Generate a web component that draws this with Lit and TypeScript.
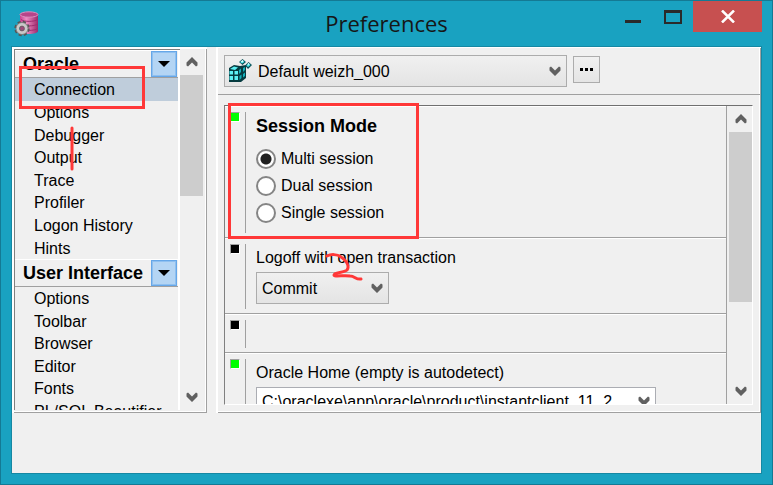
import { LitElement, html, css, svg } from "lit";
import { customElement, property } from "lit/decorators.js";

const chevron = (up = false) => svg`<svg class="chev" width="12" height="10" viewBox="0 0 12 10" aria-hidden="true">
  <path d=${up ? "M.5 8.500V5.500L6 0L11.500 5.500V8.500L10 9.500L6 5.500L2 9.500Z" : "M.5 1.500V4.500L6 10L11.500 4.500V1.500L10 .5L6 4.500L2 .5Z"} fill="#606060"/></svg>`;

@customElement("scroll-strip")
class ScrollStrip extends LitElement {
  @property({ type: Number }) size = 50;
  static styles = css`
    :host { display: flex; flex-direction: column; width: 23px; flex: none; background: #f0f0f0; }
    button { flex: none; height: 26px; padding: 0; border: 0; background: none; display: grid; place-items: center; }
    .track { flex: 1; min-height: 0; }
    .thumb { background: #cdcdcd; }
  `;
  render() {
    return html`<button aria-label="Scroll up">${chevron(true)}</button>
      <div class="track"><div class="thumb" style="height:${this.size}%"></div></div>
      <button aria-label="Scroll down">${chevron()}</button>`;
  }
}

@customElement("drop-down")
class DropDown extends LitElement {
  @property() value = "";
  @property() label = "";
  @property({ type: Boolean, reflect: true }) plain = false;
  @property({ type: Boolean, reflect: true }) icon = false;
  static styles = css`
    :host { display: grid; align-items: center; height: 32px; }
    :host([plain]) { height: 28px; }
    select {
      grid-area: 1 / 1; width: 100%; height: 100%; box-sizing: border-box; appearance: none;
      border: 1px solid #acacac; border-radius: 0; padding: 0 24px 0 5px; margin: 0; color: #000;
      font: 16px "Liberation Sans", Arial, sans-serif;
      background: linear-gradient(#f0f0f0, #e4e4e4);
    }
    :host([icon]) select { padding-left: 33px; }
    :host([plain]) select { background: #fff; border-color: #abadb3; }
    .chev { grid-area: 1 / 1; justify-self: end; margin-right: 6px; pointer-events: none; z-index: 1; }
    ::slotted(svg) { grid-area: 1 / 1; justify-self: start; margin-left: 4px; pointer-events: none; z-index: 1; }
  `;
  render() {
    return html`<select aria-label=${this.label}><option>${this.value}</option></select>
      <slot></slot>${chevron()}`;
  }
}

const groups = [
  { title: "Oracle", items: ["Connection", "Options", "Debugger", "Output", "Trace", "Profiler", "Logon History", "Hints"] },
  { title: "User Interface", items: ["Options", "Toolbar", "Browser", "Editor", "Fonts", "PL/SQL Beautifier"] },
];

const databaseIcon = svg`<svg width="26" height="26" viewBox="0 0 26 26" aria-hidden="true">
  <defs><linearGradient id="pink"><stop offset="0" stop-color="#c8408f"/><stop offset=".35" stop-color="#ee8cc4"/><stop offset="1" stop-color="#9c2a6c"/></linearGradient></defs>
  <path d="M6 3.500V20C6 24 24 24 24 20V3.500Z" fill="url(#pink)"/>
  <ellipse cx="15" cy="3.500" rx="9" ry="2.700" fill="#b8458a" stroke="#dc8fc0"/>
  <path d="M7 8.500C10 11 20 11 24 8.500M7 13C10 15.500 20 15.500 24 13M7 17.500C10 20 20 20 24 17.500" fill="none" stroke="#9e2c70"/>
  <circle cx="8" cy="17.500" r="6.200" fill="none" stroke="#555" stroke-width="3" stroke-dasharray="2.900 1.970"/>
  <circle cx="8" cy="17.500" r="4.400" fill="none" stroke="#c9c9c9" stroke-width="3.400"/>
  <circle cx="8" cy="17.500" r="6" fill="none" stroke="#707070" stroke-width=".8"/>
  <circle cx="8" cy="17.500" r="2.300" fill="#a0487c" stroke="#666"/></svg>`;

const cubesIcon = svg`<svg width="24" height="24" viewBox="0 0 24 24" aria-hidden="true">
  <path d="M1 9L6 6L12 7L18 6V19L13 23H1Z" fill="#063b40"/>
  <path d="M2 10L6 7.500L10 8.500L7 11ZM1.500 12H5V15.500H1.500ZM6.500 12H10V15.500H6.500ZM1.500 17H5V21H1.500ZM6.500 17H10V21H6.500Z" fill="#5cf1f4"/>
  <path d="M11 11L13 9.500V13L11 15ZM11.500 17L13.500 15.500V19L11.500 21ZM15 9L17 8V11L15 13ZM15 15L17 13.500V17L15 18.500Z" fill="#12b2bc"/>
  <path d="M14.500 0L18 3L14.500 6L11 3ZM20.500 3L24 6L20 10L17 6.500Z" fill="#075056"/>
  <path d="M14.500 1L16.500 3L14 4.500L12 3ZM20.500 4L22.500 6L20 8L18.500 6.500Z" fill="#4fe8ec"/>
  <path d="M13 2.500L14.500 1L15.500 2L14 3.500ZM19.500 5L20.500 4L21.500 5L20.500 6Z" fill="#e8ffff"/></svg>`;

@customElement("app-root")
class AppRoot extends LitElement {
  static styles = css`
    :host { display: block; font: 16px/20px "Liberation Sans", Arial, sans-serif; color: #000; }
    * { box-sizing: border-box; }
    .window { position: relative; height: 100vh; display: flex; flex-direction: column; background: #19a2c1; border: 1px solid #147a94; padding: 0 10px 10px; overflow: hidden; }
    .titlebar { flex: none; height: 45px; display: grid; grid-template-columns: 1fr auto 1fr; }
    .logo { padding: 10px 0 0 3px; }
    h1 { margin: 0; font: 22px/44px "Open Sans", "Noto Sans", sans-serif; color: #161616; }
    .controls { display: flex; justify-content: flex-end; align-items: flex-start; }
    .controls button { width: 40px; height: 31px; padding: 0; border: 0; background: none; display: grid; place-items: center; }
    .controls .close { width: 69px; background: #c75050; }
    .client { flex: 1; min-height: 0; display: flex; gap: 9px; background: #f0f0f0; border: 1px solid #1588a3; padding-bottom: 60px; }
    .nav { width: 195px; flex: none; display: flex; border: 1px solid #fff; border-width: 2px 0 0 2px; box-shadow: inset -1px -1px #a0a0a0, inset -2px -2px #fff; padding: 0 4px 3px 0; }
    .list { flex: 1; overflow: hidden; border: solid #808080; border-width: 1px 0 0 1px; }
    .group { border-right: 2px solid #fff; }
    .head { height: 28px; display: flex; align-items: center; justify-content: space-between; border-bottom: 1px solid #a0a0a0; border-top: 1px solid #fff; padding: 0 1px 0 8px; }
    h2 { margin: 0; font-size: 18px; line-height: 24px; font-weight: bold; white-space: nowrap; }
    .head button { width: 26px; height: 26px; padding: 0; border: 1px solid #66a7e8; outline: 1px solid #8fc0f0; outline-offset: -2px; background: #b4d5f4; display: grid; place-items: center; }
    ul { margin: 0; padding: 0; list-style: none; display: grid; grid-auto-rows: 1fr; }
    .long { height: 181px; }
    .short { height: 135px; }
    .nav a { display: flex; align-items: center; height: 100%; padding: 2px 0 0 19px; color: #000; text-decoration: none; white-space: nowrap; }
    .nav a.on { background: #bfcddb; }
    .page { flex: 1; min-width: 0; display: flex; flex-direction: column; border: 1px solid #fff; border-width: 1px 0 0 2px; box-shadow: inset -1px -1px #a0a0a0, inset -2px -2px #fff; padding-bottom: 8px; }
    .bar { flex: none; display: flex; gap: 6px; height: 47px; padding: 7px 6px 0; border-bottom: 1px solid #a0a0a0; }
    .bar drop-down { flex: 0 1 343px; }
    .more { width: 27px; height: 27px; margin-top: 1px; padding: 0; border: 1px solid #acacac; background: linear-gradient(#f0f0f0, #e5e5e5); display: grid; place-items: center; }
    .body { flex: 1; min-height: 0; display: flex; margin: 10px 8px 0 6px; border: 1px solid; border-color: #707070 #fff #fff #808080; overflow: hidden; }
    .options { flex: 1; min-width: 0; overflow: hidden; border-right: 1px solid #a0a0a0; margin-right: 2px; }
    section { display: flex; gap: 5px; padding: 5px 0 4px 5px; border-top: 1px solid #fff; border-bottom: 1px solid #a0a0a0; }
    .mark { width: 10px; height: 10px; flex: none; background: #000; border: 1px solid; border-color: #a0a0a0 #fff #fff #a0a0a0; }
    .mark.set { background: #0f0; }
    .fields { flex: 1; border-left: 1px solid #a0a0a0; padding: 2px 0 5px 10px; min-height: 28px; }
    .fields p { margin: 0; line-height: 24px; }
    fieldset { margin: 0; padding: 0 0 2px; border: 0; }
    legend { padding: 0; font-size: 18px; line-height: 24px; font-weight: bold; margin-bottom: 7px; }
    label { display: flex; align-items: center; gap: 5px; height: 27px; width: fit-content; }
    input { appearance: none; width: 20px; height: 20px; margin: 0; border: 2px solid #858585; border-radius: 50%; background: #fff; }
    input:checked { background: radial-gradient(circle, #202020 5px, #fff 6px); }
    .commit { width: 133px; margin-top: 2px; }
    .home { width: 400px; margin-top: 2px; }
    .notes { position: absolute; left: -1px; top: -1px; pointer-events: none; z-index: 3; }
  `;

  render() {
    return html`<div class="window">
      <header class="titlebar">
        <div class="logo">${databaseIcon}</div>
        <h1>Preferences</h1>
        <div class="controls">
          <button aria-label="Minimize"><svg width="16" height="14"><path d="M0 10h16v3H0z" fill="#2a2a2a"/></svg></button>
          <button aria-label="Maximize"><svg width="18" height="14"><path d="M1 1.500H17V13H1Z" fill="none" stroke="#2a2a2a" stroke-width="2"/><path d="M0 0H18V3H0Z" fill="#2a2a2a"/></svg></button>
          <button class="close" aria-label="Close"><svg width="14" height="13"><path d="M1 .5L13 12.500M13 .5L1 12.500" stroke="#fff" stroke-width="2.500"/></svg></button>
        </div>
      </header>
      <main class="client">
        <nav class="nav">
          <div class="list">
            ${groups.map((g, i) => html`<div class="group">
              <div class="head"><h2>${g.title}</h2>
                <button aria-label="${g.title} menu"><svg width="12" height="6"><path d="M0 0H12L6 6Z" fill="#000"/></svg></button></div>
              <ul class=${i ? "short" : "long"}>${g.items.map((t) => html`<li><a href="#" class=${t === "Connection" ? "on" : ""}>${t}</a></li>`)}</ul>
            </div>`)}
          </div>
          <scroll-strip .size=${39}></scroll-strip>
        </nav>
        <div class="page">
          <div class="bar">
            <drop-down icon value="Default weizh_000" label="Preference set">${cubesIcon}</drop-down>
            <button class="more" aria-label="More"><svg width="13" height="3"><path d="M0 0h3v3H0zM5 0h3v3H5zM10 0h3v3h-3z"/></svg></button>
          </div>
          <div class="body">
            <div class="options">
              <section><i class="mark set"></i><div class="fields">
                <fieldset><legend>Session Mode</legend>
                  ${["Multi session", "Dual session", "Single session"].map((t, i) => html`<label><input type="radio" name="mode" ?checked=${i === 0}>${t}</label>`)}
                </fieldset></div></section>
              <section><i class="mark"></i><div class="fields">
                <p>Logoff with open transaction</p>
                <drop-down class="commit" value="Commit" label="Logoff with open transaction"></drop-down></div></section>
              <section><i class="mark"></i><div class="fields"></div></section>
              <section><i class="mark set"></i><div class="fields">
                <p>Oracle Home (empty is autodetect)</p>
                <drop-down class="home" plain value="C:\\oraclexe\\app\\oracle\\product\\instantclient_11_2" label="Oracle Home"></drop-down></div></section>
            </div>
            <scroll-strip .size=${69}></scroll-strip>
          </div>
        </div>
      </main>
      <svg class="notes" width="460" height="300" fill="none" stroke="#ff3838" stroke-width="3" stroke-linecap="round" stroke-linejoin="round" aria-hidden="true">
        <path d="M20.500 67.500H143.500V107.500H20.500ZM229.500 104.500H417.500V237.500H229.500Z" stroke-linejoin="miter"/>
        <path d="M72 128V169"/>
        <path d="M327 256C331 254 337 254 341 257C346 260 350 266 347 270C344 273 334 272 334 275C334 277 344 275 350 276C355 276 356 280 361 279"/>
      </svg>
    </div>`;
  }
}
